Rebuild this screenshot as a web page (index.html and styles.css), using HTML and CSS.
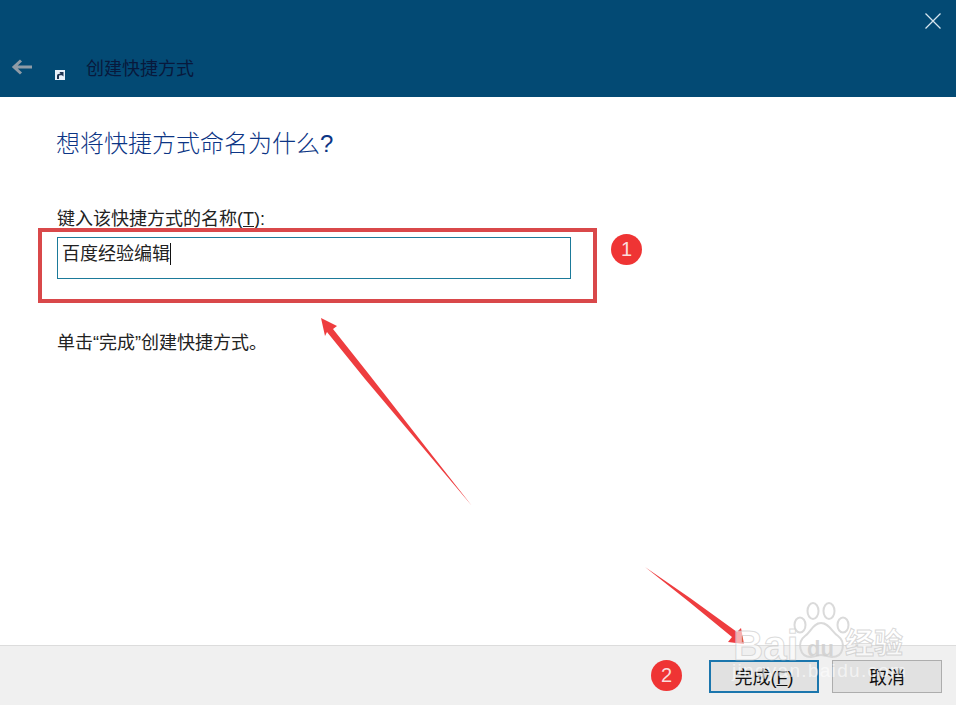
FILE: index.html
```html
<!DOCTYPE html>
<html lang="zh-CN">
<head>
<meta charset="utf-8">
<title>创建快捷方式</title>
<link rel="stylesheet" href="styles.css">
</head>
<body>
<div class="wizard">
  <header class="titlebar">
    <button class="close" aria-label="关闭">
      <svg width="16" height="16" viewBox="0 0 16 16"><path d="M.5.5l15 15M15.500.5l-15 15" stroke="#d6e6ef" stroke-width="1.300" fill="none"/></svg>
    </button>
    <div class="nav">
      <svg class="back" width="22" height="16" viewBox="0 0 22 16"><path d="M21 8H3M10 1.500L3 8l7 6.500" stroke="#8f9ba6" stroke-width="3" fill="none"/></svg>
      <svg class="shortcut" width="10" height="10" viewBox="0 0 10 10"><rect width="10" height="10" fill="#e8f0fa"/><path d="M2 9V6C2 4.500 3 3.800 4.500 3.800H5.500L4.500 2H8.500V6.500L7 5.200H5.200C4.400 5.200 4 5.600 4 6.300V9Z" fill="#1f3350"/></svg>
      <span class="wizard-name">创建快捷方式</span>
    </div>
  </header>
  <main class="content">
    <h1 class="heading">想将快捷方式命名为什么?</h1>
    <label class="field-label" for="name">键入该快捷方式的名称(<u>T</u>):</label>
    <div class="input"><span>百度经验编辑</span><i class="caret"></i></div>
    <p class="hint">单击“完成”创建快捷方式。</p>
  </main>
  <footer class="actions">
    <button class="btn btn-default">完成(<u>F</u>)</button>
    <button class="btn">取消</button>
  </footer>
</div>

<div class="mark-box"></div>
<span class="badge badge-one">1</span>
<span class="badge badge-two">2</span>
<svg class="arrows" width="956" height="705" viewBox="0 0 956 705">
  <polygon points="321,318 337,326 333,329 369.500,375 421,441 472,506 419,443 365,379 327,332 325,336" fill="#ee3d3f"/>
  <polygon points="645,567 690,598 737,632 741,628 744,644 728,642 732,637 688,601" fill="#ee3d3f"/>
</svg>
<div class="watermark">
  <span class="wm-bai">Bai</span>
  <svg class="wm-paw" width="62" height="62" viewBox="0 0 62 62" fill="none" stroke="#d4d4d4" stroke-opacity=".85" stroke-width="2">
    <ellipse cx="22" cy="10" rx="5.500" ry="8"/><ellipse cx="38" cy="10" rx="5.500" ry="8"/><ellipse cx="9" cy="24" rx="5.500" ry="7.500"/><ellipse cx="52" cy="24" rx="5.500" ry="7.500"/>
    <path d="M30 22c-8 0-10 9-16 13-8 6-6 21 6 21 4 0 7-2 10-2s7 2 11 2c12 0 14-15 6-21-6-4-9-13-17-13z"/>
  </svg>
  <span class="wm-du">du</span>
  <span class="wm-jy">经验</span>
  <span class="wm-url">jingyan.baidu.com</span>
</div>
</body>
</html>
```
FILE: styles.css
```css
* { box-sizing: border-box; }
html, body { margin: 0; height: 705px; overflow: hidden; background: #fff; }
body { font-family: "Liberation Sans", "Noto Sans CJK SC", sans-serif; font-weight: 400; color: #222; position: relative; }
.wizard { width: 956px; height: 705px; display: flex; flex-direction: column; }

.titlebar { height: 97px; background: #034a74; position: relative; display: flex; align-items: flex-end; padding: 0 0 15px 12px; }
.close { position: absolute; top: 13px; right: 15px; width: 16px; height: 16px; padding: 0; border: 0; background: none; display: block; }
.close svg { display: block; }
.nav { display: flex; align-items: center; height: 26px; position: relative; }
.back { margin-top: -4px; margin-left: -1px; }
.shortcut { margin: 12px 0 0 22px; }
.wizard-name { margin-left: 21px; font-size: 18px; line-height: 26px; color: #08193c; }

.content { flex: 1; padding: 0 0 0 57px; display: flex; flex-direction: column; }
.heading { margin: 29px 0 0 -1px; font-size: 24px; line-height: 36px; font-weight: 300; color: #0c3585; }
.field-label { margin-top: 44px; font-size: 18px; line-height: 26px; }
.input { margin-top: 5px; width: 514px; height: 42px; border: 1px solid #1b7a9a; padding: 0 4px 8px 4px; display: flex; align-items: center; font-size: 18px; line-height: 32px; }
.caret { width: 1px; height: 22px; background: #111; }
.hint { margin: 51px 0 0; font-size: 18px; line-height: 26px; }

.actions { height: 60px; background: #f0f0f0; border-top: 1px solid #dcdcdc; display: flex; justify-content: flex-end; align-items: flex-start; gap: 13px; padding: 14px 14px 0 0; }
.btn { width: 110px; height: 33px; padding: 4px 0 0; background: #e1e1e1; border: 1px solid #adadad; font: 400 18px/25px "Liberation Sans", "Noto Sans CJK SC", sans-serif; color: #111; }
.btn-default { border: 2px solid #1b76ad; }

.mark-box { position: absolute; left: 38px; top: 228px; width: 559px; height: 75px; border: 4px solid #d9484a; }
.badge { position: absolute; width: 31px; height: 31px; border-radius: 50%; background: #ef3434; color: #fbdcdc; font: 400 20px/31px "Liberation Sans", sans-serif; text-align: center; }
.badge-one { left: 611px; top: 234px; }
.badge-two { left: 651px; top: 660px; }
.arrows { position: absolute; left: 0; top: 0; }

.watermark { position: absolute; left: 0; top: 0; width: 956px; height: 705px; font-family: "Liberation Sans", sans-serif; pointer-events: none; }
.watermark span, .wm-paw { position: absolute; }
.wm-bai { left: 733px; top: 623px; font-size: 42px; line-height: 46px; font-weight: 700; color: rgba(255,255,255,.6); -webkit-text-stroke: 1px rgba(190,190,190,.55); }
.wm-paw { left: 791px; top: 601px; }
.wm-du { left: 807px; top: 636px; font-size: 22px; line-height: 26px; font-weight: 700; color: rgba(205,205,205,.8); }
.wm-jy { left: 845px; top: 622px; font-family: "Noto Sans CJK SC", sans-serif; font-size: 29px; line-height: 38px; font-weight: 700; color: rgba(255,255,255,.6); -webkit-text-stroke: 1px rgba(190,190,190,.6); }
.wm-url { left: 732px; top: 660px; font-size: 19px; line-height: 22px; letter-spacing: 1.300px; color: rgba(255,255,255,.6); }
```
